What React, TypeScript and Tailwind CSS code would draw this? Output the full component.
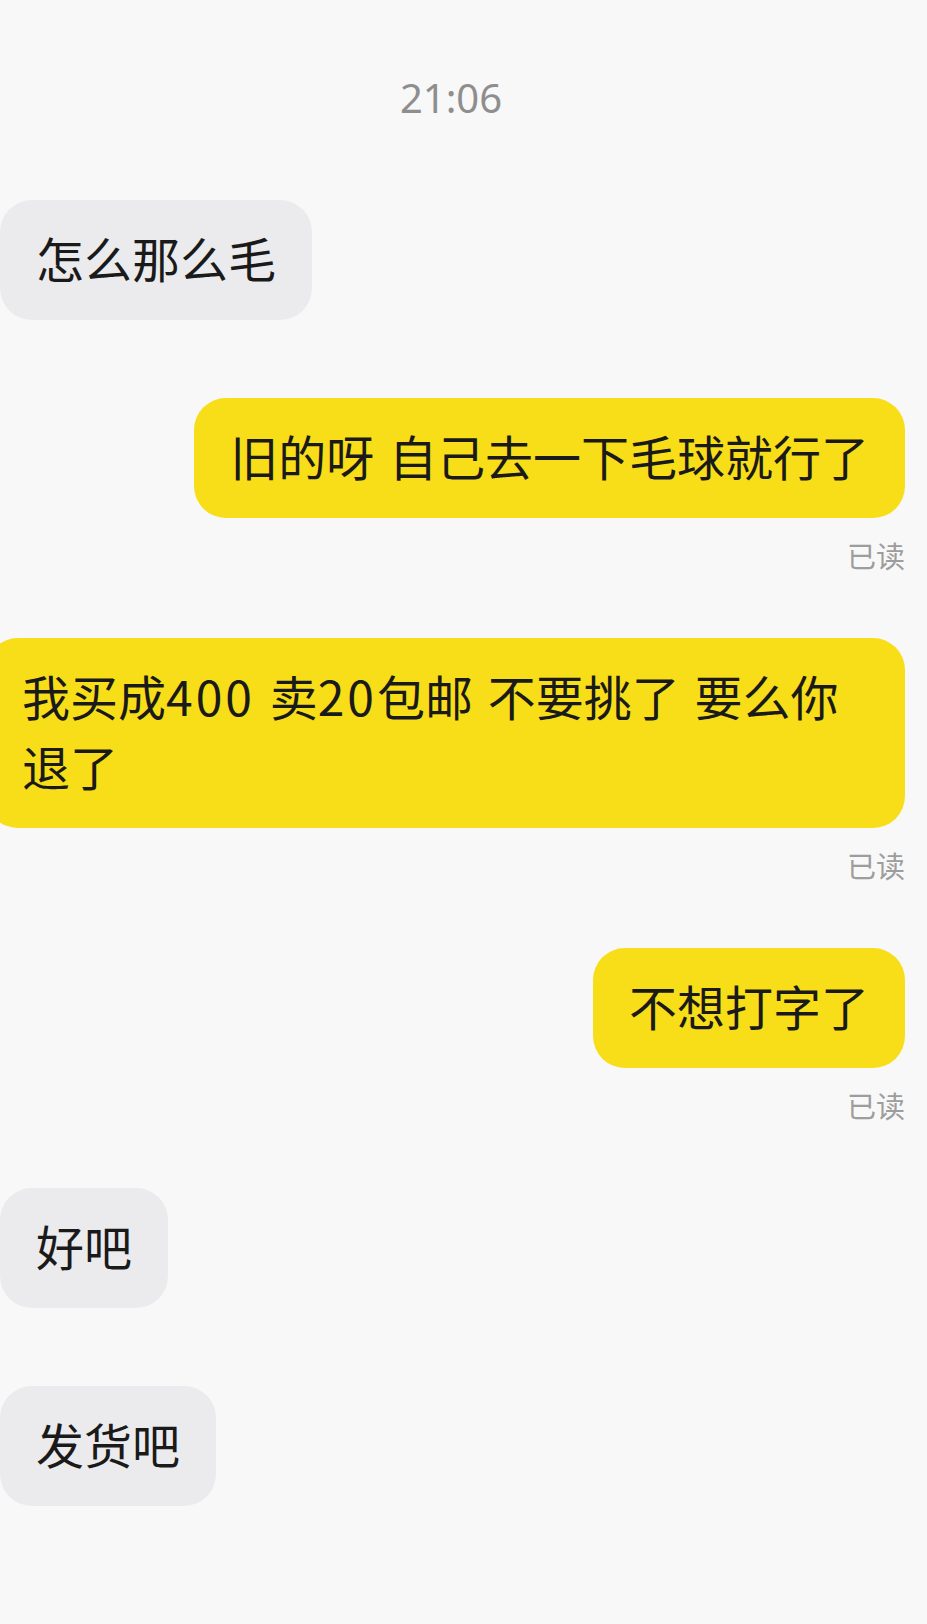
const cjk = { fontFamily: '"Noto Sans CJK SC", "Noto Sans", sans-serif' };

const bubble = "rounded-[32px] px-[36px] pt-[22px] pb-[28px] text-[48px] leading-[70px] text-[#1a1a1a] [word-spacing:4px]";

function Received({ text }: { text: string }) {
  return (
    <div className="flex justify-start">
      <div className={`${bubble} bg-[#ebebed]`}>{text}</div>
    </div>
  );
}

function Sent({ children, wide }: { children: React.ReactNode; wide?: boolean }) {
  return (
    <div className="flex flex-col items-end">
      <div className={wide ? `${bubble} w-[919px] shrink-0 bg-[#f8dd19]` : `${bubble} shrink-0 bg-[#f8dd19]`}>
        {children}
      </div>
      <div className="mt-[17px] text-[29px] leading-[40px] text-[#9d9d9d]">已读</div>
    </div>
  );
}

export default function App() {
  return (
    <div className="min-h-[1624px] w-full overflow-hidden bg-[#f8f8f8]" style={cjk}>
      <div
        className="pr-[25px] pt-[74px] text-center text-[40px] leading-[48px] text-[#8e8e8e]"
        style={{ fontFamily: '"Noto Sans", sans-serif' }}
      >
        21:06
      </div>

      <div className="mt-[78px] flex flex-col pr-[22px]">
        <Received text="怎么那么毛" />

        <div className="mt-[78px]">
          <Sent>旧的呀 自己去一下毛球就行了</Sent>
        </div>

        <div className="mt-[63px]">
          <Sent wide>
            我买成<span className="tracking-[3px]">400</span> 卖<span className="tracking-[3px]">20</span>包邮 不要挑了 要么你
            <br />
            退了
          </Sent>
        </div>

        <div className="mt-[63px]">
          <Sent>不想打字了</Sent>
        </div>

        <div className="mt-[63px]">
          <Received text="好吧" />
        </div>

        <div className="mt-[78px]">
          <Received text="发货吧" />
        </div>
      </div>
    </div>
  );
}
